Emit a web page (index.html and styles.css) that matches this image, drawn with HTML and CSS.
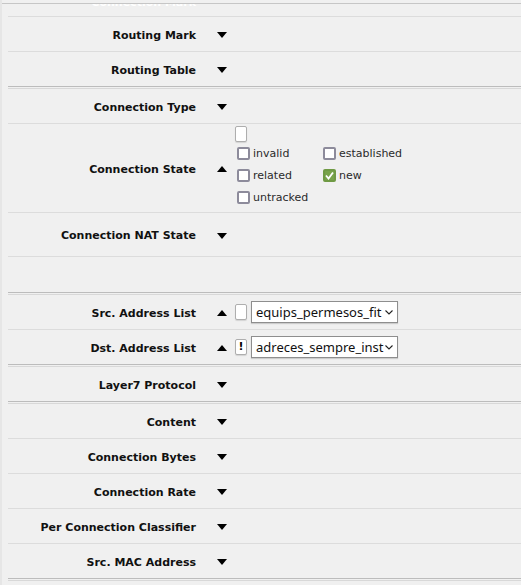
FILE: index.html
```html
<!DOCTYPE html>
<html>
<head>
<meta charset="utf-8">
<link rel="stylesheet" href="styles.css">
</head>
<body>
<div class="frame">
  <div class="topbar"></div>
  <div class="list">
    <div class="row ghost"><span class="label">Connection Mark</span></div>
    <div class="row"><span class="label">Routing Mark</span><span class="tog down"></span></div>
    <div class="row last"><span class="label">Routing Table</span><span class="tog down"></span></div>
    <div class="dbl"></div>
    <div class="row"><span class="label">Connection Type</span><span class="tog down"></span></div>
    <div class="row state"><span class="label">Connection State</span><span class="tog up"></span>
      <div class="content">
        <span class="neg"></span>
        <div class="checks">
          <label class="chk"><span class="box"></span>invalid</label>
          <label class="chk"><span class="box"></span>established</label>
          <label class="chk"><span class="box"></span>related</label>
          <label class="chk"><span class="box on"><svg viewBox="0 0 13 13" width="13" height="13"><polyline points="3,6.5 5.5,9.5 10,3.5" fill="none" stroke="#fff" stroke-width="1.8"/></svg></span>new</label>
          <label class="chk"><span class="box"></span>untracked</label>
        </div>
      </div>
    </div>
    <div class="row nat"><span class="label">Connection NAT State</span><span class="tog down"></span></div>
    <div class="row last empty"></div>
    <div class="dbl"></div>
    <div class="row"><span class="label">Src. Address List</span><span class="tog up"></span>
      <div class="content inline"><span class="neg"></span><div class="select"><span class="val">equips_permesos_fit</span><svg class="chev" viewBox="0 0 8 5" width="8" height="5"><polyline points="0.5,0.5 4,4 7.5,0.5" fill="none" stroke="#222" stroke-width="1.1"/></svg></div></div>
    </div>
    <div class="row last"><span class="label">Dst. Address List</span><span class="tog up"></span>
      <div class="content inline"><span class="neg">!</span><div class="select"><span class="val">adreces_sempre_inst</span><svg class="chev" viewBox="0 0 8 5" width="8" height="5"><polyline points="0.5,0.5 4,4 7.5,0.5" fill="none" stroke="#222" stroke-width="1.1"/></svg></div></div>
    </div>
    <div class="dbl"></div>
    <div class="row last"><span class="label">Layer7 Protocol</span><span class="tog down"></span></div>
    <div class="dbl"></div>
    <div class="row"><span class="label">Content</span><span class="tog down"></span></div>
    <div class="row"><span class="label">Connection Bytes</span><span class="tog down"></span></div>
    <div class="row"><span class="label">Connection Rate</span><span class="tog down"></span></div>
    <div class="row"><span class="label">Per Connection Classifier</span><span class="tog down"></span></div>
    <div class="row last"><span class="label">Src. MAC Address</span><span class="tog down"></span></div>
    <div class="dbl"></div>
    <div class="row"><span class="label">Dst. MAC Address</span><span class="tog down"></span></div>
  </div>
</div>
</body>
</html>
```
FILE: styles.css
```css
html, body {
  margin: 0;
  padding: 0;
  background: #f0f0f0;
  height: 100%;
  overflow: hidden;
}
.frame {
  border-left: 2px solid #e6e6e6;
  height: 585px;
  overflow: hidden;
  font-family: "DejaVu Sans", Verdana, sans-serif;
  color: #111;
}
.topbar {
  height: 3px;
  border-bottom: 1px solid #c6c6c6;
  position: relative;
  z-index: 2;
  background: #f0f0f0;
}
.list {
  padding-left: 6px;
}
.row {
  display: grid;
  grid-template-columns: 188px 39px 1fr;
  align-items: center;
  min-height: 34px;
  border-bottom: 1px solid #dcdcdc;
}
.row.last {
  border-bottom: none;
}
.dbl {
  height: 1px;
  border-top: 1px solid #bcbcbc;
  border-bottom: 1px solid #d8d8d8;
}
.label {
  text-align: right;
  font-weight: bold;
  font-size: 11px;
  line-height: 13px;
  padding-top: 2px;
  white-space: nowrap;
}
.ghost {
  min-height: 12px;
  height: 12px;
  overflow: hidden;
  align-items: start;
}
.ghost .label {
  color: #fff;
  padding-top: 0;
  margin-top: -8px;
}
.tog {
  justify-self: start;
  margin-left: 21px;
  margin-top: 2px;
  width: 0;
  height: 0;
  border-left: 5px solid transparent;
  border-right: 5px solid transparent;
}
.tog.down {
  border-top: 6px solid #000;
}
.tog.up {
  border-bottom: 6px solid #000;
}
.state {
  min-height: 87px;
}
.nat {
  min-height: 43px;
}
.empty {
  min-height: 35px;
}
.content {
  display: flex;
  flex-direction: column;
  align-items: flex-start;
}
.state .content {
  padding: 2px 0 4px;
}
.content.inline {
  flex-direction: row;
  align-items: center;
  gap: 4px;
}
.neg {
  box-sizing: border-box;
  width: 12px;
  height: 16px;
  background: #fff;
  border: 1px solid #aeaeae;
  border-radius: 2px;
  box-shadow: 0 1px 1px rgba(0,0,0,0.12);
  font-size: 11px;
  font-weight: bold;
  line-height: 14px;
  text-align: center;
  color: #000;
}
.checks {
  display: grid;
  grid-template-columns: 86px 86px;
  grid-auto-rows: 22px;
  margin-left: 2px;
}
.chk {
  display: flex;
  align-items: center;
  gap: 3px;
  font-size: 11px;
  color: #2a2a2a;
  white-space: nowrap;
}
.box {
  box-sizing: border-box;
  width: 13px;
  height: 13px;
  border: 2px solid #8d8b9b;
  border-radius: 2px;
  background: #fff;
  flex: none;
}
.box.on {
  border-color: #6f9a44;
  background: #78a34a;
  display: flex;
  align-items: center;
  justify-content: center;
}
.box.on svg {
  flex: none;
}
.select {
  box-sizing: border-box;
  width: 147px;
  height: 22px;
  background: #fff;
  border: 1px solid #8e8e8e;
  box-shadow: 0 1px 1px rgba(0,0,0,0.15);
  display: flex;
  align-items: center;
  padding: 0 4px 0 4px;
  gap: 1px;
}
.val {
  flex: 1;
  overflow: hidden;
  white-space: nowrap;
  font-family: "Noto Sans", "Open Sans", sans-serif;
  font-size: 13px;
  color: #111;
  line-height: 20px;
}
.chev {
  flex: none;
}
```
